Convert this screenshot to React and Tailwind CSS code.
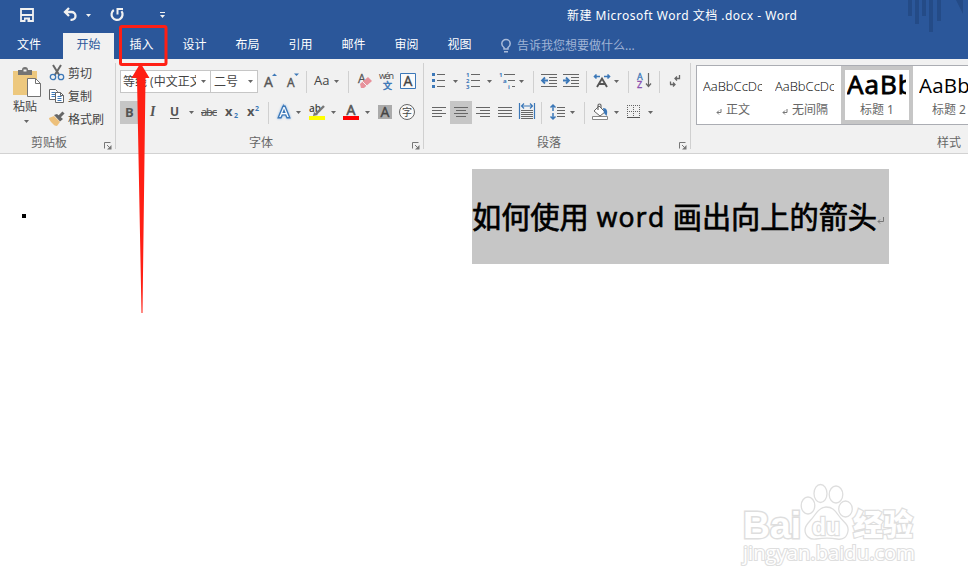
import clsx from 'clsx';

const TABS = ['开始', '插入', '设计', '布局', '引用', '邮件', '审阅', '视图'];

const STYLES = [
  { name: '正文', mark: true, sample: 'AaBbCcDc', size: 'text-[13px] font-light' },
  { name: '无间隔', mark: true, sample: 'AaBbCcDc', size: 'text-[13px] font-light' },
  { name: '标题 1', sample: 'AaBb', size: 'pb-1 text-[26px] tracking-[1px] [-webkit-text-stroke:0.9px_black]', selected: true },
  { name: '标题 2', sample: 'AaBbC', size: 'pb-[2px] text-[20.5px] tracking-[0.2px]' },
];

function Svg({ w = 16, h = 16, className, children }) {
  return (
    <svg width={w} height={h} viewBox={`0 0 ${w} ${h}`} fill="none" className={clsx('shrink-0 overflow-visible', className)}>
      {children}
    </svg>
  );
}

// Small dropdown triangle
function Caret({ className, color = '#666' }) {
  return (
    <Svg w={5} h={3} className={className}>
      <path d="M0 0h5L2.500 3z" fill={color} />
    </Svg>
  );
}

function Sep({ className }) {
  return <div className={clsx('h-[22px] w-px shrink-0 bg-[#d0d0d0]', className)} />;
}

function Lines({ rows, className, w = 14 }) {
  return (
    <Svg w={w} h={12} className={className}>
      {rows.map(([x1, x2], i) => (
        <path key={i} d={`M${x1} ${i * 3 + 1.5}H${x2}`} stroke="#666" />
      ))}
    </Svg>
  );
}

function Group({ label, labelClass, className, launcher = true, children }) {
  return (
    <div className={clsx('flex h-[94px] shrink-0 flex-col', className)}>
      <div className="h-[75px] shrink-0">{children}</div>
      <div className="relative flex h-[18px] items-center text-[#666]">
        <span className={clsx('whitespace-nowrap', labelClass)}>{label}</span>
        {launcher && (
          <Svg w={8} h={8} className="absolute right-[3px] top-[8px]">
            <path d="M.5 6.500V.5H6.500M3 3l3 3" stroke="#777" />
            <path d="M7.500 3v4.500H3z" fill="#777" />
          </Svg>
        )}
      </div>
    </div>
  );
}

function TitleBar() {
  return (
    <div className="relative flex h-[33px] items-center text-white">
      <Svg w={14} h={14} className="ml-5 -mt-[3px]">
        <path d="M1 1h12v12H1z" stroke="#f1f1f1" strokeWidth="1.800" />
        <path d="M1 7h12" stroke="#f1f1f1" strokeWidth="2" />
        <path d="M4 9.500h6V14H4z" fill="#f1f1f1" />
        <path d="M5.500 11.500h2V14h-2z" fill="#2b579a" />
      </Svg>
      <Svg w={15} h={14} className="ml-[29px] -mt-[5px]">
        <path d="M6 1L2 5l4 4M2 5h6.500a4 3.900 0 0 1 0 7.800H7.500" stroke="#f1f1f1" strokeWidth="2.300" />
      </Svg>
      <Caret color="#f1f1f1" className="ml-2 -mt-[3px]" />
      <Svg w={14} h={14} className="ml-[19px] -mt-[5px]">
        <path d="M3.800 3A5.500 5.500 0 1 0 11.500 4.200" stroke="#f1f1f1" strokeWidth="2.200" />
        <path d="M7.500 7.500V2H13" stroke="#f1f1f1" strokeWidth="2" />
      </Svg>
      <Svg w={6} h={6} className="ml-[36px] -mt-[4px]">
        <path d="M0 .5h5" stroke="#f1f1f1" />
        <path d="M0 3h5L2.500 6z" fill="#f1f1f1" />
      </Svg>
      <span className="-mt-[2px] ml-[401px] whitespace-nowrap text-[12px] tracking-[0.49px]">
        新建 Microsoft Word 文档 .docx - Word
      </span>
      <Svg w={60} h={33} className="absolute right-0 top-0">
        <path d="M0 0h4v16H0zM7 0h4v24H7zM14 0h4v16h-4zM21 0h4v32h-4zM29 0h4v21h-4zM48 0h7v14z" fill="#244b87" />
      </Svg>
    </div>
  );
}

function TabBar() {
  return (
    <div className="flex h-[26px] items-stretch text-white">
      <div className="mr-1 flex w-[58px] items-center justify-center pb-[2px]">文件</div>
      {TABS.map((tab, i) => (
        <div
          key={tab}
          className={clsx('mx-px flex w-[51px] items-center justify-center pb-[2px]', i === 0 && 'bg-[#f1f1f1] text-[#2b579a]')}
        >
          {tab}
        </div>
      ))}
      <Svg w={10} h={14} className="ml-[15px] mt-[6px]">
        <path d="M3 10V8.500C1.500 7.500.8 6.300.8 4.800a4.200 4.200 0 0 1 8.400 0c0 1.500-.7 2.700-2.200 3.700V10zM3 12.700h4" stroke="#a9bbda" strokeWidth="1.500" />
      </Svg>
      <span className="ml-[6px] pt-[4px] leading-[18px] text-[#a0b4d6]">告诉我您想要做什么...</span>
    </div>
  );
}

function ClipboardGroup() {
  return (
    <Group label="剪贴板" labelClass="ml-[31px]" className="w-[115px]">
      <div className="flex">
        <div className="ml-[13px] flex w-[36px] flex-col pt-2">
          <Svg w={28} h={30}>
            <path d="M0 4h24v24H0z" fill="#edc87e" />
            <path d="M5 3h4a3 3 0 0 1 6 0h4v5H5z" fill="#737373" />
            <path d="M10.500 2.500h3v2h-3z" fill="#f1f1f1" />
            <path d="M14.500 11.500h8l5 5v13h-13z" fill="#fff" stroke="#737373" />
            <path d="M22.500 11.500v5h5" stroke="#737373" />
          </Svg>
          <span className="pt-px text-[#444]">粘贴</span>
          <Caret className="ml-[11px] mt-[4px]" />
        </div>
        <div className="flex flex-col pt-[3px] text-[#444]">
          <div className="flex h-[23px] items-center">
            <Svg w={16} h={16} className="mr-[3px] -mt-px">
              <path d="M4 0l6.500 10.500M12 0L5.500 10.500" stroke="#666" strokeWidth="2" />
              <circle cx="4" cy="12" r="2.700" stroke="#3c78b8" strokeWidth="1.300" />
              <circle cx="12" cy="12" r="2.700" stroke="#3c78b8" strokeWidth="1.300" />
            </Svg>
            剪切
          </div>
          <div className="flex h-[23px] items-center">
            <Svg w={16} h={16} className="mr-[3px] -mt-px">
              <path d="M.5 1.500h6l2 2v8h-8z" fill="#fff" stroke="#666" />
              <path d="M2.500 4.500h4m-4 2h4m-4 2h4" stroke="#3c78b8" />
              <path d="M6.500 4.500h5l3 3v7h-8z" fill="#fff" stroke="#666" />
              <path d="M11.500 4.500v3h3" stroke="#666" />
              <path d="M8.500 8.500h4m-4 2h4m-4 2h4" stroke="#3c78b8" />
            </Svg>
            复制
          </div>
          <div className="flex h-[23px] items-center">
            <Svg w={16} h={16} className="mr-[3px] -mt-px">
              <path d="M0 7l5-2 6 6-3 4c-2 0-3-1-4-2S0 9 0 7z" fill="#edc07a" />
              <path d="M5 4l3-1 6 5-3 2.500z" fill="#666" />
              <path d="M9.500 6.500l5-5" stroke="#666" strokeWidth="3" />
            </Svg>
            格式刷
          </div>
        </div>
      </div>
    </Group>
  );
}

function FontGroup() {
  return (
    <Group label="字体" labelClass="ml-[133px]" className="w-[307px]">
      <div className="flex flex-col pt-[11px] font-['Open_Sans','Noto_Sans_CJK_SC',sans-serif]">
        <div className="flex h-[23px] items-center text-[#444]">
          <div className="ml-1 flex h-[23px] w-[91px] items-center border border-[#c6c6c6] bg-white pl-[2px]">
            <span className="w-[73px] overflow-hidden whitespace-nowrap">等线 (中文正文)</span>
            <Caret className="ml-[5px]" />
          </div>
          <div className="-ml-px flex h-[23px] w-[48px] items-center border border-[#c6c6c6] bg-white pl-[3px]">
            <span className="w-[25px]">二号</span>
            <Caret className="ml-[9px]" />
          </div>
          <Svg w={14} h={16} className="ml-[6px] -mt-[3px]">
            <text x="0" y="14.500" fontSize="14" fill="#555" stroke="#555" strokeWidth=".4">A</text>
            <path d="M8 4h5L10.500 1.500z" fill="#3c78b8" />
          </Svg>
          <Svg w={14} h={16} className="ml-[9px] -mt-[3px]">
            <text x="0" y="14.500" fontSize="12" fill="#555" stroke="#555" strokeWidth=".4">A</text>
            <path d="M7 1.500h5L9.500 4z" fill="#3c78b8" />
          </Svg>
          <Sep className="ml-[5px]" />
          <span className="ml-[7px] -mt-[3px] w-[20px] text-[13px]">Aa</span>
          <Caret />
          <Sep className="ml-[9px]" />
          <Svg w={15} h={16} className="ml-[9px] -mt-px">
            <text x="0" y="10" fontSize="12" fill="#555" stroke="#555" strokeWidth=".3">A</text>
            <path d="M2 11l8-7 4 4-8 7H3z" fill="#e8919b" />
            <path d="M4.500 8.500l4.500 4.500" stroke="#f1f1f1" />
          </Svg>
          <Svg w={16} h={18} className="ml-[6px] -mt-px">
            <text x="0" y="7" fontSize="9" textLength="15" fill="#444">wén</text>
            <text x="4" y="16.500" fontSize="9" fill="#3c78b8" stroke="#3c78b8" strokeWidth=".5">文</text>
          </Svg>
          <Svg w={16} h={16} className="ml-[5px] -mt-px">
            <path d="M.5.5h15v15H.5z" fill="#fafafa" stroke="#3c78b8" />
            <text x="8" y="13" fontSize="14" textAnchor="middle" fill="#444" stroke="#444" strokeWidth=".4">A</text>
          </Svg>
        </div>
        <div className="mt-2 flex h-[23px] items-center text-[#555]">
          <div className="ml-1 flex h-[23px] w-[22px] items-center bg-[#c6c6c6] pb-[2px] pl-[5px] text-[13px] font-bold">B</div>
          <span className="ml-[8px] -mt-px w-[20px] font-['Liberation_Serif'] text-[14px] font-bold italic">I</span>
          <span className="-mt-[2px] w-[11px] text-[12px] font-bold underline underline-offset-2">U</span>
          <Caret className="ml-[8px]" />
          <Svg w={17} h={16} className="ml-[7px] -mt-px">
            <text x="0" y="12" fontSize="11" textLength="16" fill="#555" stroke="#555" strokeWidth=".2">abc</text>
            <path d="M0 8.500h16" stroke="#555" />
          </Svg>
          <Svg w={14} h={16} className="ml-[7px] -mt-px">
            <text x="0" y="12" fontSize="13" fontWeight="700" fill="#555">x</text>
            <text x="9" y="14" fontSize="7" fontWeight="700" fill="#3c78b8">2</text>
          </Svg>
          <Svg w={14} h={16} className="ml-[8px] -mt-px">
            <text x="0" y="12" fontSize="13" fontWeight="700" fill="#555">x</text>
            <text x="8" y="7" fontSize="7" fontWeight="700" fill="#3c78b8">2</text>
          </Svg>
          <Sep className="ml-[7px]" />
          <Svg w={14} h={16} className="ml-[8px] -mt-px">
            <text
              x="7"
              y="13"
              fontSize="15"
              textAnchor="middle"
              fill="#fff"
              stroke="#3c78b8"
              strokeWidth="2.800"
              className="[filter:drop-shadow(0_0_1px_#8db8e6)] [paint-order:stroke]"
            >
              A
            </text>
          </Svg>
          <Caret className="ml-[5px]" />
          <Svg w={16} h={16} className="ml-[8px] -mt-px">
            <text x="0" y="8" fontSize="10" fontWeight="600" fill="#444">ab</text>
            <path d="M15 2L7 10" stroke="#777" strokeWidth="2.400" />
            <path d="M4 12l1-4 4 3z" fill="#777" />
            <path d="M0 12h16v4H0z" fill="#ff0" />
          </Svg>
          <Caret className="ml-[6px]" />
          <Svg w={16} h={16} className="ml-[7px] -mt-px">
            <text x="8" y="11" fontSize="14" textAnchor="middle" fill="#555" stroke="#555" strokeWidth=".6">A</text>
            <path d="M0 12h16v4H0z" fill="red" />
          </Svg>
          <Caret className="ml-[6px]" />
          <Svg w={14} h={14} className="ml-[8px] -mt-px">
            <path d="M0 0h14v14H0z" fill="#ababab" />
            <text x="7" y="12" fontSize="14" textAnchor="middle" fill="#444" stroke="#444" strokeWidth=".4">A</text>
          </Svg>
          <Svg w={16} h={16} className="ml-[7px] -mt-px">
            <circle cx="8" cy="8" r="7.500" fill="#fafafa" stroke="#666" />
            <text x="8" y="11.500" fontSize="10" textAnchor="middle" fill="#444">字</text>
          </Svg>
        </div>
      </div>
    </Group>
  );
}

function ParagraphGroup() {
  return (
    <Group label="段落" labelClass="ml-[113px]" className="w-[266px]">
      <div className="flex flex-col pt-[11px]">
        <div className="flex h-[23px] items-center">
          <Svg w={14} h={16} className="ml-[8px] -mt-[3px]">
            <path d="M0 1h3v3H0zM0 7h3v3H0zM0 13h3v3H0z" fill="#3c78b8" />
            <path d="M5 2.500h8M5 8.500h8M5 14.500h8" stroke="#666" />
          </Svg>
          <Caret className="ml-[7px]" />
          <Svg w={14} h={16} className="ml-[8px] -mt-[3px]">
            <g fontSize="6" fontWeight="700" fill="#3c78b8">
              <text x="0" y="5">1</text>
              <text x="0" y="11">2</text>
              <text x="0" y="17">3</text>
            </g>
            <path d="M5 2.500h9M5 8.500h9M5 14.500h9" stroke="#666" />
          </Svg>
          <Caret className="ml-[7px]" />
          <Svg w={17} h={16} className="ml-[7px] -mt-[3px]">
            <g fontSize="6" fontWeight="700" fill="#3c78b8">
              <text x="0" y="5">1</text>
              <text x="4" y="11">a</text>
              <text x="9" y="17">i</text>
            </g>
            <path d="M5 2.500h11M9 8.500h7M13 14.500h3" stroke="#666" />
          </Svg>
          <Caret className="ml-[3px]" />
          <Sep className="ml-[9px]" />
          <Svg w={16} h={14} className="ml-[7px] -mt-[3px]">
            <path d="M0 1.500h16M8 4.500h8M8 7.500h8M8 10.500h8M0 13.500h16" stroke="#666" />
            <path d="M4 4.500L1 7.500l3 3M1 7.500h6" stroke="#3c78b8" strokeWidth="1.800" />
          </Svg>
          <Svg w={16} h={14} className="ml-[6px] -mt-[3px]">
            <path d="M0 1.500h16M8 4.500h8M8 7.500h8M8 10.500h8M0 13.500h16" stroke="#666" />
            <path d="M3 4.500l3 3-3 3M0 7.500h6" stroke="#3c78b8" strokeWidth="1.800" />
          </Svg>
          <Sep className="ml-[7px]" />
          <Svg w={16} h={16} className="ml-[7px] -mt-px">
            <path d="M2.500 1.500L.5 3.500l2 2M.5 3.500H6M13.500 1.500l2 2-2 2M15.500 3.500H10" stroke="#3c78b8" strokeWidth="1.600" />
            <path d="M3 14L8 5.500l5 8.500M5 11h6" stroke="#555" strokeWidth="1.900" />
          </Svg>
          <Caret className="ml-[4px]" />
          <Sep className="ml-[9px]" />
          <Svg w={15} h={16} className="ml-[8px] -mt-[3px]">
            <text x="0" y="7.500" fontSize="9" fill="#3c78b8" stroke="#3c78b8" strokeWidth=".3">A</text>
            <text x="0" y="16" fontSize="9" fill="#8a4fb0" stroke="#8a4fb0" strokeWidth=".3">Z</text>
            <path d="M11.500 1v13M9 11.500l2.500 3 2.500-3" stroke="#666" strokeWidth="1.200" />
          </Svg>
          <Sep className="ml-[7px]" />
          <Svg w={11} h={14} className="ml-[10px] -mt-px">
            <path d="M9.500 1v3.500H5M7 2.500l-2 2 2 2" stroke="#666" strokeWidth="1.300" />
            <path d="M0 10.500h5M3 8.500l2 2-2 2M.5 7.500v3" stroke="#666" strokeWidth="1.300" />
          </Svg>
        </div>
        <div className="mt-2 flex h-[23px] items-center">
          <Lines className="ml-[8px] -mt-px" rows={[[0, 14], [0, 10], [0, 14], [0, 10]]} />
          <div className="ml-[4px] flex h-[23px] w-[22px] items-center justify-center bg-[#c6c6c6]">
            <Lines className="-mt-px" rows={[[0, 14], [2, 12], [0, 14], [2, 12]]} />
          </div>
          <Lines className="ml-[4px] -mt-px" rows={[[0, 14], [4, 14], [0, 14], [4, 14]]} />
          <Lines className="ml-[8px] -mt-px" rows={[[0, 14], [0, 14], [0, 14], [0, 14]]} />
          <Svg w={16} h={16} className="ml-[7px] -mt-[3px]">
            <path d="M.5 0v16M15.500 0v16M5 .5L2.500 3 5 5.500M11 .5L13.500 3 11 5.500M3 3h10" stroke="#3c78b8" strokeWidth="1.200" />
            <path d="M2 7.500h12M2 9.500h12M2 11.500h12M2 13.500h12M2 15.500h12" stroke="#666" />
          </Svg>
          <Sep className="ml-[6px]" />
          <Svg w={15} h={16} className="ml-[8px] -mt-px">
            <path d="M3 1v6M3 9v6M.5 3.500L3 1l2.500 2.500M.5 12.500L3 15l2.500-2.500" stroke="#3c78b8" strokeWidth="1.500" />
            <path d="M7 3.500h8M7 6.500h8M7 9.500h8M7 12.500h8" stroke="#666" />
          </Svg>
          <Caret className="ml-[5px]" />
          <Sep className="ml-[9px]" />
          <Svg w={16} h={16} className="ml-[7px] -mt-px">
            <path d="M7 2l6 6-5 4-6-5z" fill="#fff" stroke="#666" />
            <path d="M6 6V1.500a1.500 1.500 0 0 1 3 0V4" stroke="#666" strokeWidth="1.200" />
            <path d="M11 4c4 0 5 3 3.500 8L12 9z" fill="#3c78b8" />
            <path d="M.5 12.500h15v3H.5z" fill="#fff" stroke="#888" />
          </Svg>
          <Caret className="ml-[6px]" />
          <Svg w={13} h={14} className="ml-[8px] -mt-px">
            <path d="M0 .5h13M0 6.500h13M.5 0v12M6.500 0v12M12.500 0v12" stroke="#666" strokeDasharray="1 1" />
            <path d="M0 12.500h13" stroke="#555" />
          </Svg>
          <Caret className="ml-[8px]" />
        </div>
      </div>
    </Group>
  );
}

function StylesGroup() {
  return (
    <Group label="样式" labelClass="ml-[246px]" className="w-[277px] overflow-hidden" launcher={false}>
      <div className="ml-[5px] mt-[6px] flex h-[60px] w-[300px] border border-[#abadb3] bg-white">
        {STYLES.map((s) => (
          <div
            key={s.name}
            className={clsx('flex h-[58px] w-[72px] shrink-0 flex-col border-4', s.selected ? 'border-[#c6c6c6]' : 'border-transparent')}
          >
            <div
              className={clsx(
                "ml-[2px] flex h-[31px] w-[59px] shrink-0 items-center overflow-hidden whitespace-nowrap font-['Open_Sans'] text-black",
                s.size
              )}
            >
              {s.sample}
            </div>
            <div className="flex h-[18px] items-center justify-center gap-1 whitespace-nowrap text-[#666]">
              {s.mark && (
                <Svg w={6} h={6} className="mt-[3px]">
                  <path d="M5 0v3.500H1M3 1.500l-2 2 2 2" stroke="#777" />
                </Svg>
              )}
              {s.name}
            </div>
          </div>
        ))}
      </div>
    </Group>
  );
}

function GroupDivider() {
  return <div className="mt-1 h-[86px] w-px shrink-0 bg-[#d0d0d0]" />;
}

function Watermark() {
  return (
    <Svg w={176} h={86} className="absolute left-[742px] top-[482px]">
      <g fill="#fff" stroke="#dedede" strokeWidth="1.300" fontFamily="Liberation Sans" fontWeight="700">
        <text x="1" y="55.500" fontSize="37" strokeWidth="3" textLength="58" lengthAdjust="spacingAndGlyphs" className="[paint-order:stroke]">
          Bai
        </text>
        <ellipse cx="66" cy="23.500" rx="6.800" ry="8.500" />
        <ellipse cx="78.500" cy="11.500" rx="6.500" ry="9" />
        <ellipse cx="94" cy="12.500" rx="6.800" ry="8.500" />
        <ellipse cx="103.500" cy="27" rx="6.800" ry="8" />
        <path d="M84 25c6 0 9 3 13 9s10 8 9 15-6 9-11 8-15-1-21 0-11-3-11-9 5-8 9-14 7-9 12-9z" />
        <text x="70" y="52.500" fontSize="23" strokeWidth="2.400" textLength="28" lengthAdjust="spacingAndGlyphs" className="[paint-order:stroke]">
          du
        </text>
        <text x="111" y="53" fontSize="30" strokeWidth="2.400" fontWeight="900" fontFamily="Noto Sans CJK SC" textLength="60" className="[paint-order:stroke]">
          经验
        </text>
        <text x="1" y="78" fontSize="20" strokeWidth="2.200" fontWeight="400" fontFamily="Open Sans" textLength="172" lengthAdjust="spacingAndGlyphs" className="[paint-order:stroke]">
          jingyan.baidu.com
        </text>
      </g>
    </Svg>
  );
}

export default function App() {
  return (
    <div className="relative h-[588px] w-[968px] overflow-hidden bg-white font-['Noto_Sans','Noto_Sans_CJK_SC',sans-serif] text-[12px] leading-[18px]">
      <header className="bg-[#2b579a]">
        <TitleBar />
        <TabBar />
      </header>

      <div className="flex h-[95px] overflow-hidden border-b border-[#d2d2d2] bg-[#f1f1f1]">
        <ClipboardGroup />
        <GroupDivider />
        <FontGroup />
        <GroupDivider />
        <ParagraphGroup />
        <GroupDivider />
        <StylesGroup />
      </div>

      {/* Document */}
      <main className="flex pt-[15px]">
        <div className="ml-[22px] mt-[45px] h-1 w-1 bg-black" />
        <h1 className="ml-[446px] flex h-[95px] w-[417px] items-center whitespace-nowrap bg-[#c6c6c6] font-['Open_Sans','Noto_Sans_CJK_SC',sans-serif] text-[29.2px] font-normal text-black [-webkit-text-stroke:0.7px_black]">
          <span>如何使用</span>
          <span className="ml-[8px] w-[76px] text-[26.5px] tracking-[1.3px]">word</span>
          <span>画出向上的箭头</span>
          <Svg w={7} h={7} className="mt-2">
            <path d="M6.500 0v4.500H1M3 2.500l-2 2 2 2" stroke="#777" />
          </Svg>
        </h1>
      </main>

      <Watermark />

      {/* Callout on the insert tab */}
      <Svg w={50} h={290} className="absolute left-[119px] top-[25px]">
        <rect x="1.500" y="1.500" width="45.500" height="38" rx="1.500" stroke="#ff1f14" strokeWidth="3" />
        <path d="M21.500 38L30.500 53H26.500L23.500 288H22.500L18 53H12.500z" fill="#ff1f14" />
      </Svg>
    </div>
  );
}
